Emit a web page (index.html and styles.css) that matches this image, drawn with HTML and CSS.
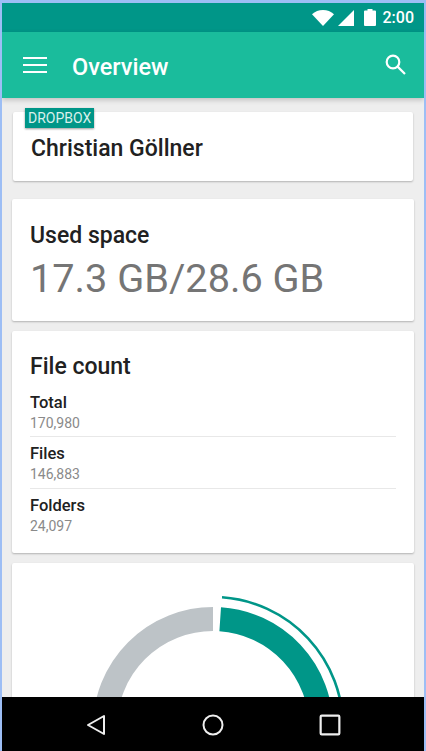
FILE: index.html
```html
<!DOCTYPE html>
<html lang="en">
<head>
<meta charset="utf-8">
<title>Overview</title>
<link rel="stylesheet" href="styles.css">
</head>
<body>
<div class="device">
  <header class="status-bar">
    <svg class="ic-wifi" viewBox="0 0 22 16"><path d="M11 16 0 4.2C3 1.6 6.800 0 11 0s8 1.600 11 4.200z"/></svg>
    <svg class="ic-signal" viewBox="0 0 16 16"><path d="M0 16 16 0v16z"/></svg>
    <svg class="ic-battery" viewBox="0 0 12 17"><path d="M3.500 0h5v1.500H11a1 1 0 0 1 1 1V16a1 1 0 0 1-1 1H1a1 1 0 0 1-1-1V2.500a1 1 0 0 1 1-1h2.500z"/></svg>
    <span class="clock">2:00</span>
  </header>
  <div class="toolbar">
    <svg class="ic-menu" viewBox="0 0 24 16"><path d="M0 1h24M0 8h24M0 15h24"/></svg>
    <h1 class="title">Overview</h1>
    <svg class="ic-search" viewBox="0 0 21 21"><circle cx="8" cy="8" r="6.300"/><path d="M12.600 12.600 20 20"/></svg>
  </div>
  <main class="content">
    <section class="card card-account">
      <span class="badge">DROPBOX</span>
      <p class="account-name">Christian Göllner</p>
    </section>
    <section class="card card-space">
      <h2 class="card-title">Used space</h2>
      <p class="space-value">17.3 GB/28.6 GB</p>
    </section>
    <section class="card card-count">
      <h2 class="card-title">File count</h2>
      <ul class="stats">
        <li class="stat"><span class="stat-label">Total</span><span class="stat-value">170,980</span></li>
        <li class="stat"><span class="stat-label">Files</span><span class="stat-value">146,883</span></li>
        <li class="stat"><span class="stat-label">Folders</span><span class="stat-value">24,097</span></li>
      </ul>
    </section>
    <section class="card card-chart">
      <svg class="chart" viewBox="0 0 402 200">
        <path class="arc-free" d="M201 56A108 108 0 0 0 93 164"/>
        <path class="arc-used" d="M208.200 56.200A108 108 0 0 1 309 164"/>
        <path class="arc-outer" d="M210 34.300A130 130 0 0 1 331 164"/>
      </svg>
    </section>
  </main>
  <nav class="nav-bar">
    <svg class="ic-nav" viewBox="0 0 20 22"><path d="M18 2v18L2 11z"/></svg>
    <svg class="ic-nav" viewBox="0 0 22 22"><circle cx="11" cy="11" r="9.500"/></svg>
    <svg class="ic-nav" viewBox="0 0 20 20"><rect x="1.500" y="1.500" width="17" height="17" rx="1"/></svg>
  </nav>
</div>
</body>
</html>
```
FILE: styles.css
```css
* { box-sizing: border-box; }
html, body { margin: 0; padding: 0; height: 100%; overflow: hidden; }
body { background: #fff; font-family: Roboto, "Noto Sans", sans-serif; }

.device {
  width: 426px;
  height: 751px;
  display: flex;
  flex-direction: column;
  overflow: hidden;
  border-top: 3px solid #9dbef5;
  border-left: 2px solid #9dbef5;
  border-right: 2px solid #9dbef5;
  background: #eee;
}

.status-bar {
  height: 29px;
  flex: none;
  display: flex;
  align-items: center;
  justify-content: flex-end;
  padding-right: 10px;
  background: #009688;
  color: #fff;
}
.status-bar svg { fill: #fff; display: block; }
.ic-wifi { width: 22px; height: 16px; margin-right: 4px; }
.ic-signal { width: 16px; height: 16px; margin-right: 10px; }
.ic-battery { width: 12px; height: 17px; margin-right: 7px; }
.clock { font-size: 16px; font-weight: 500; line-height: 20px; }

.toolbar {
  height: 66px;
  flex: none;
  display: flex;
  align-items: center;
  padding: 0 18px 0 21px;
  background: #1abc9c;
  box-shadow: 0 2px 5px rgba(0,0,0,.2);
  position: relative;
  color: #fff;
}
.ic-menu { width: 24px; height: 16px; fill: none; stroke: #fff; stroke-width: 2; }
.title { margin: 4px auto 0 25px; font-size: 23.500px; font-weight: 500; line-height: 28px; }
.ic-search { width: 21px; height: 21px; fill: none; stroke: #fff; stroke-width: 2.200; margin-bottom: 2px; }

.content {
  flex: 1;
  min-height: 0;
  overflow: hidden;
  padding-top: 14px;
  display: flex;
  flex-direction: column;
}

.card {
  flex: none;
  background: #fff;
  margin: 0 10px;
  border-radius: 2px;
  box-shadow: 0 1px 2px rgba(0,0,0,.25);
}

.card-account {
  position: relative;
  height: 69px;
  margin: 0 11px 18px;
  padding: 22px 18px 0;
}
.badge {
  position: absolute;
  left: 12px;
  top: -4px;
  padding: 0 3px;
  height: 20px;
  font-size: 14px;
  line-height: 20px;
  color: #d8f0ec;
  background: #009688;
  box-shadow: 0 1px 2px rgba(0,0,0,.4);
}
.account-name { margin: 0; font-size: 23px; font-weight: 500; line-height: 30px; color: #212121; }

.card-title { margin: 0; font-size: 23px; font-weight: 500; line-height: 30px; color: #212121; }

.card-space { height: 122px; margin-bottom: 10px; padding: 22px 18px 0; }
.space-value { margin: 3px 0 0; font-size: 39.700px; font-weight: 400; line-height: 50px; color: #757575; }

.card-count { height: 222px; margin-bottom: 10px; padding: 21px 18px 0; }
.stats { list-style: none; margin: 3px 0 0; padding: 0; }
.stat {
  display: flex;
  flex-direction: column;
  height: 52px;
  padding-top: 6px;
  border-bottom: 1px solid #e8e8e8;
}
.stat:first-child { padding-top: 7px; }
.stat:last-child { border-bottom: 0; }
.stat-label { font-size: 16.500px; font-weight: 500; line-height: 21px; color: #212121; }
.stat-value { font-size: 14px; line-height: 20px; color: #8a8a8a; }

.card-chart { height: 200px; }
.chart { display: block; width: 402px; height: 200px; fill: none; }
.arc-free { stroke: #bdc3c7; stroke-width: 24; }
.arc-used { stroke: #009688; stroke-width: 24; }
.arc-outer { stroke: #009688; stroke-width: 2.600; }

.nav-bar {
  height: 54px;
  flex: none;
  display: flex;
  align-items: center;
  justify-content: center;
  gap: 95px;
  padding-top: 2px;
  background: #000;
  position: relative;
}
.ic-nav { width: 22px; height: 22px; fill: none; stroke: #eee; stroke-width: 2; stroke-linejoin: round; }
```
